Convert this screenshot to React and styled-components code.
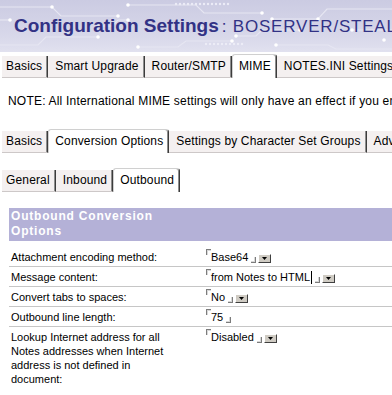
import React from 'react';
import styled, { createGlobalStyle } from 'styled-components';

const GlobalStyle = createGlobalStyle`
  html, body {
    margin: 0;
    padding: 0;
    background: #fff;
    overflow: hidden;
  }
  body {
    font-family: "Liberation Sans", Arial, sans-serif;
    color: #000;
  }
`;

const Page = styled.div`
  width: 392px;
  height: 395px;
  overflow: hidden;
`;

const Banner = styled.header`
  position: relative;
  height: 52px;
  box-sizing: border-box;
  padding: 16px 0 0 14px;
  background: linear-gradient(#cbcbe2, #d8d8ea 70%, #e1e1ef);
  overflow: hidden;
  white-space: nowrap;
`;

const Circuit = styled.svg`
  position: absolute;
  left: 0;
  top: 0;
`;

const Title = styled.h1`
  position: relative;
  margin: 0;
  font-size: 19px;
  line-height: 20px;
  font-weight: bold;
  color: #323285;
`;

const Server = styled.span`
  font-size: 17px;
  font-weight: normal;
  letter-spacing: 0.8px;
  margin-left: 3px;
`;

const TabBar = styled.div`
  display: flex;
  align-items: flex-end;
  height: 24px;
  padding-left: 2px;
  margin-top: ${(p) => p.$top}px;
  white-space: nowrap;
  overflow: hidden;
`;

const Tab = styled.div`
  flex: none;
  box-sizing: border-box;
  height: ${(p) => (p.$active ? 24 : 22)}px;
  padding: 0 5px 0 ${(p) => (p.$active ? 6 : 7)}px;
  font-size: 12px;
  letter-spacing: 0.15px;
  line-height: ${(p) => (p.$active ? 23 : 21)}px;
  background: ${(p) => (p.$active ? '#fff' : '#f4f0f0')};
  border-right: 1px solid #3c3c3c;
  box-shadow: inset -1px 0 0 #8e8e8e;
  border-bottom: ${(p) => (p.$active ? 'none' : '1px solid #cdc8c8')};
  border-top: ${(p) => (p.$active ? '1px solid #d0d0d0' : 'none')};
  border-left: ${(p) => (p.$active ? '1px solid #d0d0d0' : 'none')};
  border-radius: ${(p) => (p.$active ? '3px 3px 0 0' : '0')};

  &:first-child {
    padding-left: 4px;
  }
`;

const Note = styled.p`
  margin: 17px 0 0;
  padding-left: 8px;
  font-size: 12px;
  letter-spacing: 0.2px;
  line-height: 13px;
  white-space: nowrap;
`;

const Table = styled.section`
  margin: 16px 0 0 9px;
  font-size: 11px;
`;

const HeaderBand = styled.div`
  height: 33px;
  box-sizing: border-box;
  padding: 1px 0 0 2px;
  background: #b4b1d7;
`;

const HeaderTitle = styled.div`
  width: 190px;
  color: #fff;
  font-size: 12px;
  font-weight: bold;
  letter-spacing: 0.8px;
  line-height: 15px;
`;

const Rows = styled.div`
  padding-top: 6px;
`;

const Row = styled.div`
  display: grid;
  grid-template-columns: 196px 1fr;
  align-items: start;
  padding: 3px 0 2px;
  line-height: 14px;
  border-bottom: ${(p) => (p.$last ? 'none' : '1px solid #c6c6c6')};
`;

const Label = styled.div`
  padding: 0 26px 0 2px;
`;

const Field = styled.div`
  display: flex;
  align-items: flex-end;
  padding-left: 1px;
  white-space: nowrap;
`;

const OpenMark = styled.span`
  align-self: flex-start;
  width: 4px;
  height: 5px;
  margin-top: -1px;
  border-top: 1px solid #7c7c7c;
  border-left: 1px solid #7c7c7c;
  box-shadow: inset 1px 1px 0 #d8d8d8;
`;

const CloseMark = styled.span`
  width: 4px;
  height: 5px;
  margin: 0 2px 1px 3px;
  border-right: 1px solid #7c7c7c;
  border-bottom: 1px solid #7c7c7c;
  box-shadow: inset -1px -1px 0 #d8d8d8;
`;

const Caret = styled.span`
  width: 1px;
  height: 13px;
  margin-left: 1px;
  background: #000;
`;

const DropButton = styled.span`
  display: flex;
  align-items: center;
  justify-content: center;
  box-sizing: border-box;
  width: 13px;
  height: 9px;
  margin-bottom: 1px;
  background: #cfcbc3;
  border: 1px solid;
  border-color: #fff #404040 #404040 #fff;
`;

const Arrow = () => (
  <svg width="5" height="3" viewBox="0 0 5 3">
    <path d="M0 0H5L2.5 3Z" fill="#000" />
  </svg>
);

const traces = [
  'M0 7H52L61 16H118',
  'M128 5H196L204 13H262',
  'M272 19H318L327 9H392',
  'M0 45H38L46 37H98',
  'M138 47H178L186 41H232',
  'M276 45H328L336 49H392',
  'M96 26H112L118 20H128',
  'M352 30H392',
  'M0 20H10',
  'M236 36H256L262 30H300',
];

const dots = [
  [52, 7], [118, 16], [128, 5], [262, 13], [272, 19], [318, 19], [98, 37],
  [138, 47], [232, 41], [276, 45], [352, 30], [128, 20], [300, 30], [10, 20],
  [236, 36], [24, 30], [200, 28], [384, 40],
];

const BannerCircuit = () => (
  <Circuit width="392" height="52" viewBox="0 0 392 52">
    {traces.map((d, i) => (
      <path key={i} d={d} fill="none" stroke="#e6e6f2" strokeWidth="1.2" />
    ))}
    {Array.from({ length: 14 }).map((_, i) => (
      <circle key={'a' + i} cx={176 + i * 4} cy="4" r="1.2" fill="#ececf6" />
    ))}
    {Array.from({ length: 10 }).map((_, i) => (
      <circle key={'b' + i} cx={206 + i * 4} cy="44" r="1.2" fill="#ececf6" />
    ))}
    {dots.map(([x, y], i) => (
      <circle key={'d' + i} cx={x} cy={y} r="1.8" fill="#fff" />
    ))}
  </Circuit>
);

const rows = [
  { label: 'Attachment encoding method:', value: 'Base64', drop: true },
  { label: 'Message content:', value: 'from Notes to HTML', drop: true, caret: true },
  { label: 'Convert tabs to spaces:', value: 'No', drop: true },
  { label: 'Outbound line length:', value: '75' },
  {
    label: 'Lookup Internet address for all Notes addresses when Internet address is not defined in document:',
    value: 'Disabled',
    drop: true,
  },
];

export default function App() {
  return (
    <Page>
      <GlobalStyle />
      <Banner>
        <BannerCircuit />
        <Title>
          Configuration Settings<Server>: BOSERVER/STEALTH</Server>
        </Title>
      </Banner>

      <TabBar $top={2}>
        <Tab>Basics</Tab>
        <Tab>Smart Upgrade</Tab>
        <Tab>Router/SMTP</Tab>
        <Tab $active>MIME</Tab>
        <Tab>NOTES.INI Settings</Tab>
      </TabBar>

      <Note>
        NOTE: All International MIME settings will only have an effect if you enable them
      </Note>

      <TabBar $top={21}>
        <Tab>Basics</Tab>
        <Tab $active>Conversion Options</Tab>
        <Tab>Settings by Character Set Groups</Tab>
        <Tab>Advanced</Tab>
      </TabBar>

      <TabBar $top={15}>
        <Tab>General</Tab>
        <Tab>Inbound</Tab>
        <Tab $active>Outbound</Tab>
      </TabBar>

      <Table>
        <HeaderBand>
          <HeaderTitle>Outbound Conversion Options</HeaderTitle>
        </HeaderBand>
        <Rows>
          {rows.map((r, i) => (
            <Row key={r.label} $last={i === rows.length - 1}>
              <Label>{r.label}</Label>
              <Field>
                <OpenMark />
                {r.value}
                {r.caret && <Caret />}
                <CloseMark />
                {r.drop && (
                  <DropButton>
                    <Arrow />
                  </DropButton>
                )}
              </Field>
            </Row>
          ))}
        </Rows>
      </Table>
    </Page>
  );
}
